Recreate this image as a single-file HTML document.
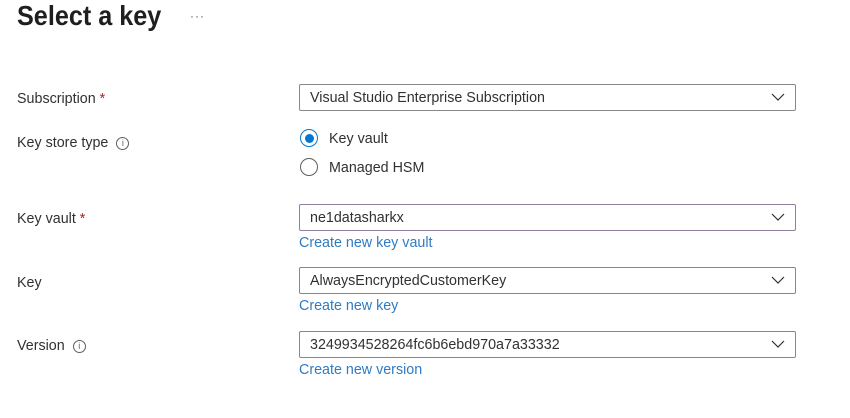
<!DOCTYPE html>
<html><head><style>
body{margin:0;width:850px;height:418px;background:#fff;font-family:"Liberation Sans",sans-serif;color:#323130;position:relative;overflow:hidden}
.a{position:absolute}
h1{position:absolute;left:17px;top:0px;margin:0;font-size:28px;font-weight:600;color:#201f1e;transform:scaleX(0.9);transform-origin:0 0}
.lbl{position:absolute;left:17px;font-size:14.3px;line-height:18px}
.req{color:#a4262c}
.info{display:inline-block;width:11px;height:11px;border:1px solid #605e5c;border-radius:50%;font-size:9px;line-height:11px;text-align:center;margin-left:8px;vertical-align:1px;color:#605e5c}
.dd{position:absolute;left:299px;height:25px;border:1px solid #8a8886;border-radius:2px;font-size:14.3px;line-height:27px;padding-left:10px;box-sizing:content-box;width:485px}
.dd.p{border-color:#8e7ea0}
.dd svg{position:absolute;right:10px;top:8px}
.link{position:absolute;left:299px;font-size:14.3px;color:#2f7bc4;line-height:18px}
.radio{position:absolute;left:300px;width:18px;height:18px;border:1px solid #605e5c;border-radius:50%;box-sizing:border-box}
.radio.on{border-color:#0078d4}
.radio.on::after{content:"";position:absolute;left:3.5px;top:3.5px;width:9px;height:9px;border-radius:50%;background:#0078d4}
.rl{position:absolute;left:329px;font-size:14.3px;line-height:18px}
</style></head><body>
<h1>Select a key</h1>
<div class="a" style="left:190px;top:9px;font-size:12px;color:#605e5c;letter-spacing:1px">···</div>

<div class="lbl" style="top:90px">Subscription <span class="req">*</span></div>
<div class="lbl" style="top:134px">Key store type<span class="info">i</span></div>
<div class="lbl" style="top:210px">Key vault <span class="req">*</span></div>
<div class="lbl" style="top:274px">Key</div>
<div class="lbl" style="top:337px">Version<span class="info">i</span></div>

<div class="dd" style="top:84px">Visual Studio Enterprise Subscription<svg width="14" height="9"><path d="M1 1l6 6 6-6" fill="none" stroke="#323130" stroke-width="1.2"/></svg></div>

<div class="radio on" style="top:129px"></div><div class="rl" style="top:130px">Key vault</div>
<div class="radio" style="top:158px"></div><div class="rl" style="top:159px">Managed HSM</div>

<div class="dd p" style="top:204px">ne1datasharkx<svg width="14" height="9"><path d="M1 1l6 6 6-6" fill="none" stroke="#323130" stroke-width="1.2"/></svg></div>
<div class="link" style="top:234px">Create new key vault</div>

<div class="dd p" style="top:267px">AlwaysEncryptedCustomerKey<svg width="14" height="9"><path d="M1 1l6 6 6-6" fill="none" stroke="#323130" stroke-width="1.2"/></svg></div>
<div class="link" style="top:297px">Create new key</div>

<div class="dd" style="top:331px">3249934528264fc6b6ebd970a7a33332<svg width="14" height="9"><path d="M1 1l6 6 6-6" fill="none" stroke="#323130" stroke-width="1.2"/></svg></div>
<div class="link" style="top:361px">Create new version</div>
</body></html>
